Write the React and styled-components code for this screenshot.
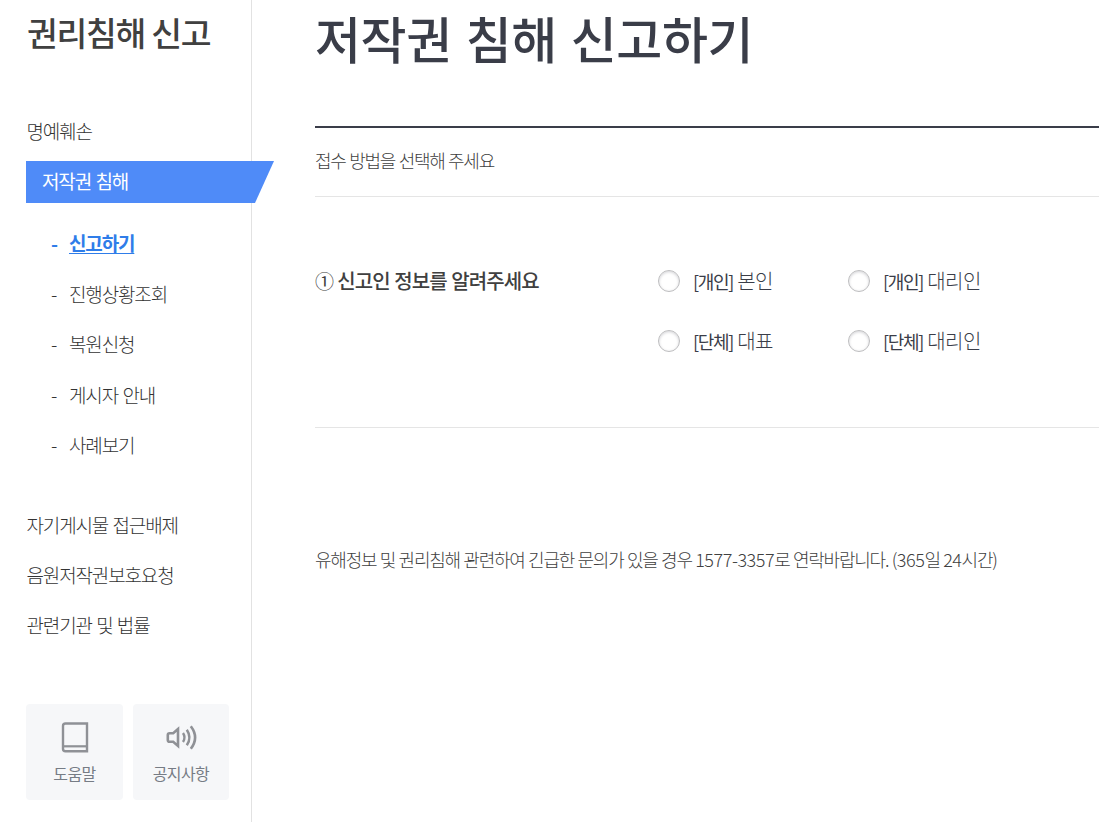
import React, { useState } from "react";
import styled, { createGlobalStyle } from "styled-components";

const GlobalStyle = createGlobalStyle`
  * {
    box-sizing: border-box;
  }

  body {
    margin: 0;
    background: #fff;
    color: #404040;
    font-family: "Noto Sans CJK KR", sans-serif;
    font-weight: 300;
    overflow: hidden;
  }

  ul,
  h1,
  h2,
  h3,
  p {
    margin: 0;
    padding: 0;
    list-style: none;
  }
`;

const Container = styled.div`
  display: flex;
  width: 100%;
  height: 822px;
  overflow: hidden;
`;

const Sidebar = styled.aside`
  flex: none;
  width: 252px;
  padding-left: 26px;
  border-right: 1px solid #e2e2e2;
`;

const SidebarTitle = styled.h2`
  height: 111px;
  padding: 7px 0 0 1px;
  font-size: 33.5px;
  line-height: 50px;
  font-weight: 500;
  letter-spacing: -1.3px;
  white-space: nowrap;
`;

const MenuLink = styled.a`
  display: block;
  height: 50px;
  padding-left: 0.5px;
  font-size: 19px;
  line-height: 40px;
  letter-spacing: -1.15px;
  word-spacing: 1.3px;
  color: #333;
  white-space: nowrap;
`;

const ActiveMenu = styled.a`
  display: block;
  width: 248px;
  height: 42px;
  padding-left: 16px;
  background: #4f8bf8;
  clip-path: polygon(0 0, 100% 0, 229px 100%, 0 100%);
  color: #fff;
  font-size: 19px;
  font-weight: 400;
  line-height: 40px;
  letter-spacing: -1.15px;
  word-spacing: 1.3px;
`;

const SubMenu = styled.ul`
  padding: 15px 0 34px 25px;
`;

const SubMenuItem = styled.li`
  display: flex;
  height: 50.5px;
  font-size: 19px;
  line-height: 50px;
  letter-spacing: -1.15px;
  word-spacing: 1.5px;
  color: ${({ $active }) => ($active ? "#2f7de9" : "#333")};
  font-weight: ${({ $active }) => ($active ? 700 : 300)};

  &::before {
    content: "-";
    width: 18px;
  }

  a {
    text-decoration: ${({ $active }) => ($active ? "underline" : "none")};
    text-decoration-thickness: 1px;
    text-underline-offset: 2px;
  }
`;

const ShortcutList = styled.div`
  display: flex;
  gap: 10px;
  padding-top: 49px;
`;

const Shortcut = styled.a`
  display: flex;
  flex-direction: column;
  align-items: center;
  width: ${({ $width }) => $width}px;
  height: 96px;
  padding-top: 17px;
  border-radius: 4px;
  background: #f6f7f9;
  color: #767c85;
  font-size: 16px;
  font-weight: 400;
  line-height: 24px;
  letter-spacing: -0.6px;

  svg {
    flex: none;
    margin-bottom: 8px;
  }
`;

const Content = styled.main`
  flex: 1;
  min-width: 0;
  padding-left: 63px;
`;

const PageTitle = styled.h1`
  height: 128px;
  border-bottom: 2px solid #3a3d49;
  color: #3a3d48;
  font-size: 50px;
  font-weight: 500;
  line-height: 74px;
  letter-spacing: -0.4px;
  word-spacing: 3px;
  white-space: nowrap;
`;

const Description = styled.p`
  height: 69px;
  border-bottom: 1px solid #e5e5e5;
  font-size: 18px;
  line-height: 65px;
  letter-spacing: -1.3px;
  word-spacing: 1px;
`;

const Question = styled.section`
  display: flex;
  height: 231px;
  padding-top: 69px;
  border-bottom: 1px solid #e5e5e5;
`;

const QuestionTitle = styled.h3`
  width: 343px;
  font-size: 20px;
  font-weight: 500;
  line-height: 30px;
  letter-spacing: -0.85px;
  word-spacing: 0.7px;
`;

const QuestionNumber = styled.span`
  font-size: 19px;
  font-weight: 400;
  letter-spacing: -1.2px;
`;

const OptionGrid = styled.div`
  display: grid;
  grid-template-columns: 190px 190px;
  grid-auto-rows: 30px;
  row-gap: 30px;
`;

const Option = styled.label`
  display: flex;
  align-items: center;
  color: #3a3d48;
  font-size: 20px;
  line-height: 30px;
  letter-spacing: -0.5px;

  strong {
    margin-right: 4px;
    font-size: 18px;
    font-weight: 400;
    letter-spacing: -1.3px;
  }
`;

const Radio = styled.input`
  appearance: none;
  flex: none;
  width: 22px;
  height: 22px;
  margin: 0 13px 0 0;
  border: 1px solid #bdbdbf;
  border-radius: 50%;
  background: #fff;
  box-shadow: inset 0 1px 3px #d2d2d6;

  &:checked {
    border: 6px solid #4f8bf8;
  }
`;

const Notice = styled.p`
  padding-top: 116px;
  font-size: 18px;
  line-height: 30px;
  letter-spacing: -1.23px;
  word-spacing: 0.7px;
  white-space: nowrap;
`;

const Num = styled.span`
  letter-spacing: -0.45px;
`;

const subMenus = ["신고하기", "진행상황조회", "복원신청", "게시자 안내", "사례보기"];

const bottomMenus = ["자기게시물 접근배제", "음원저작권보호요청", "관련기관 및 법률"];

const options = [
  { id: "self", type: "개인", label: "본인" },
  { id: "agent", type: "개인", label: "대리인" },
  { id: "ceo", type: "단체", label: "대표" },
  { id: "groupAgent", type: "단체", label: "대리인" },
];

function BookIcon() {
  return (
    <svg width="32" height="32" viewBox="0 0 32 32" fill="none" stroke="#8f9196">
      <path d="M28 2.5H6.5Q4 2.5 4 5V28Q4 30.2 6.5 30.2H28Z" strokeWidth="2.4" />
      <path d="M4 25.3H28" strokeWidth="2.2" />
    </svg>
  );
}

function SpeakerIcon() {
  return (
    <svg width="32" height="32" viewBox="0 0 32 32" fill="none" stroke="#8f9196">
      <path d="M13 8L8.2 12.2H4.6Q2.8 12.2 2.8 14V19Q2.8 20.8 4.6 20.8H8.2L13 25Z" strokeWidth="2.6" />
      <path d="M18 12Q21 16.5 18 21" strokeWidth="2.4" />
      <path d="M21.8 8.7Q27 16.5 21.8 24.3" strokeWidth="2.5" />
      <path d="M25.8 5.2Q34.4 16.5 25.8 27.8" strokeWidth="2.6" />
    </svg>
  );
}

function App() {
  const [reporter, setReporter] = useState("");

  return (
    <Container>
      <GlobalStyle />
      <Sidebar>
        <SidebarTitle>권리침해 신고</SidebarTitle>
        <MenuLink>명예훼손</MenuLink>
        <ActiveMenu>저작권 침해</ActiveMenu>
        <SubMenu>
          {subMenus.map((menu, idx) => (
            <SubMenuItem key={menu} $active={idx === 0}>
              <a>{menu}</a>
            </SubMenuItem>
          ))}
        </SubMenu>
        {bottomMenus.map((menu) => (
          <MenuLink key={menu}>{menu}</MenuLink>
        ))}
        <ShortcutList>
          <Shortcut $width={97}>
            <BookIcon />
            도움말
          </Shortcut>
          <Shortcut $width={96}>
            <SpeakerIcon />
            공지사항
          </Shortcut>
        </ShortcutList>
      </Sidebar>
      <Content>
        <PageTitle>저작권 침해 신고하기</PageTitle>
        <Description>접수 방법을 선택해 주세요</Description>
        <Question>
          <QuestionTitle>
            <QuestionNumber>①</QuestionNumber> 신고인 정보를 알려주세요
          </QuestionTitle>
          <OptionGrid>
            {options.map(({ id, type, label }) => (
              <Option key={id}>
                <Radio
                  type="radio"
                  name="reporter"
                  checked={reporter === id}
                  onChange={() => setReporter(id)}
                />
                <strong>[{type}]</strong>
                {label}
              </Option>
            ))}
          </OptionGrid>
        </Question>
        <Notice>
          유해정보 및 권리침해 관련하여 긴급한 문의가 있을 경우 <Num>1577-3357</Num>로
          연락바랍니다. <Num>(365</Num>일 <Num>24</Num>시간)
        </Notice>
      </Content>
    </Container>
  );
}

export default App;
